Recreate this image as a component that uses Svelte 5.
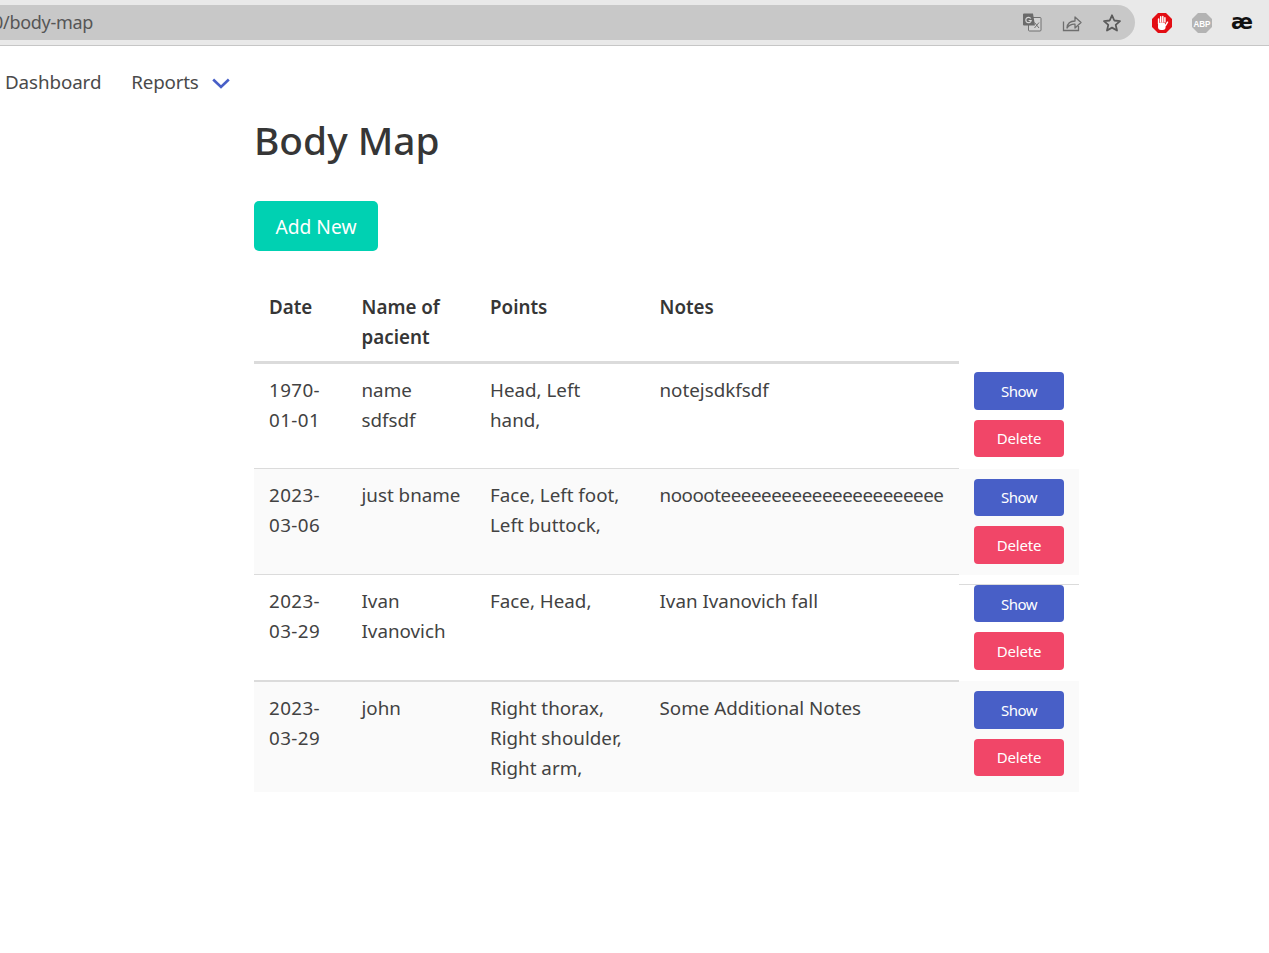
<script>
  const rows = [
    { date: '1970-01-01', name: 'name sdfsdf', points: 'Head, Left hand,', notes: 'notejsdkfsdf', cls: 'r1' },
    { date: '2023-03-06', name: 'just bname', points: 'Face, Left foot, Left buttock,', notes: 'nooooteeeeeeeeeeeeeeeeeeeeee', cls: 'r2' },
    { date: '2023-03-29', name: 'Ivan Ivanovich', points: 'Face, Head,', notes: 'Ivan Ivanovich fall', cls: 'r3' },
    { date: '2023-03-29', name: 'john', points: 'Right thorax, Right shoulder, Right arm,', notes: 'Some Additional Notes', cls: 'r4' }
  ];
</script>

<div class="chrome">
  <div class="pill">
    <span class="url">0/body-map</span>
    <div class="pill-icons">
      <svg width="20" height="20" viewBox="0 0 20 20" aria-hidden="true">
        <rect x="6.500" y="4.500" width="12.500" height="13.500" rx="1" fill="#d2d2d2" stroke="#707070" stroke-width="1"/>
        <path d="M12.500 9.500l4.500 5.500M17 9.500L12.500 15" fill="none" stroke="#707070" stroke-width="1"/>
        <path d="M2 0.500h9l2 12H2A1 1 0 0 1 1 11.500v-10A1 1 0 0 1 2 .5z" fill="#6a6a6a"/>
        <path d="M8.800 5.500A2.700 2.700 0 1 0 9.200 7.500H6.600" fill="none" stroke="#d8d8d8" stroke-width="1.200"/>
      </svg>
      <svg width="20" height="20" viewBox="0 0 20 20" aria-hidden="true">
        <path d="M1.500 8.500v9h15V13" fill="none" stroke="#6e6e6e" stroke-width="1.300"/>
        <path d="M5 15c.4-4.500 3.500-7 8-7V4l6 5.500-6 5.500v-3.800c-3.500-.2-6 1-8 3.800z" fill="none" stroke="#6e6e6e" stroke-width="1.300" stroke-linejoin="round"/>
      </svg>
      <svg width="20" height="20" viewBox="0 0 20 20" aria-hidden="true">
        <path d="M10 2.300l2.300 5.200 5.700.6-4.300 3.800 1.300 5.600-5-2.900-5 2.900 1.300-5.600L2 8.100l5.700-.6z" fill="none" stroke="#5a5a5a" stroke-width="1.800" stroke-linejoin="round"/>
      </svg>
    </div>
  </div>
  <div class="ext-icons">
    <svg width="22" height="22" viewBox="0 0 22 22" aria-hidden="true">
      <path d="M7 1h8l6 6v8l-6 6H7l-6-6V7z" fill="#e30d13"/>
      <rect x="7" y="10.500" width="7.600" height="7.500" rx="3" fill="#fff"/>
      <path d="M7.600 12V7M9.700 10V4.800M11.800 10V4.500M13.900 10V5.800M14.600 13.500l1.900-3.300" fill="none" stroke="#fff" stroke-width="1.500" stroke-linecap="round"/>
    </svg>
    <svg class="abp" width="22" height="22" viewBox="0 0 22 22" aria-hidden="true">
      <path d="M7 1h8l6 6v8l-6 6H7l-6-6V7z" fill="#b3b3b3"/>
      <text x="11" y="14.500" text-anchor="middle" class="abp-text" textLength="17" lengthAdjust="spacingAndGlyphs">ABP</text>
    </svg>
    <span class="ae">æ</span>
  </div>
</div>

<nav class="nav">
  <a class="nav-item" href="#dashboard">Dashboard</a>
  <a class="nav-item reports" href="#reports">Reports
    <svg width="18" height="12" viewBox="0 0 18 12" aria-hidden="true">
      <path d="M1.200 2.500l7.800 7.500 7.800-7.500" fill="none" stroke="#485fc7" stroke-width="2.600"/>
    </svg>
  </a>
</nav>

<main class="content">
  <h1 class="title">Body Map</h1>
  <button class="add">Add New</button>
  <table class="table">
    <colgroup>
      <col class="c1" /><col class="c2" /><col class="c3" /><col class="c4" /><col class="c5" />
    </colgroup>
    <thead>
      <tr>
        <th>Date</th>
        <th>Name of pacient</th>
        <th>Points</th>
        <th>Notes</th>
        <th class="plain"></th>
      </tr>
    </thead>
    <tbody>
      {#each rows as row}
        <tr class={row.cls}>
          <td class="date">{row.date}</td>
          <td class="name">{row.name}</td>
          <td>{row.points}</td>
          <td class="notes">{row.notes}</td>
          <td class="actions">
            <div class="stack">
              <button class="btn show">Show</button>
              <button class="btn del">Delete</button>
            </div>
          </td>
        </tr>
      {/each}
    </tbody>
  </table>
</main>

<style>
  :global(body) {
    margin: 0;
    background: #fff;
    color: #363636;
    font-family: "Noto Sans", "Open Sans", sans-serif;
  }
  .chrome {
    height: 40px;
    background: #e9e9e9;
    border-bottom: 1px solid #c6c6c6;
    display: flex;
    padding-top: 5px;
  }
  .pill {
    width: 1135px;
    height: 35px;
    background: #c8c8c8;
    border-radius: 0 18px 18px 0;
    display: flex;
    align-items: center;
    justify-content: space-between;
    overflow: hidden;
    flex: none;
  }
  .url {
    font-size: 18px;
    letter-spacing: -0.3px;
    color: #565656;
    margin-left: -7px;
    margin-top: -1px;
  }
  .pill-icons {
    display: flex;
    gap: 20px;
    margin-right: 13px;
  }
  .ext-icons {
    display: flex;
    align-items: center;
    height: 35px;
    padding-left: 16px;
    gap: 18px;
  }
  .abp-text {
    font: 700 9px "Liberation Sans", sans-serif;
    fill: #fff;
  }
  .ae {
    font: 700 21px/22px "DejaVu Sans", sans-serif;
    color: #111;
    width: 20px;
    margin-top: -1px;
  }
  .nav {
    display: flex;
    align-items: center;
    gap: 30px;
    height: 71px;
    padding-left: 5px;
    font-size: 18.800px;
    letter-spacing: -0.1px;
  }
  .nav-item {
    color: #4a4a4a;
    text-decoration: none;
  }
  .reports {
    display: flex;
    align-items: center;
    gap: 13px;
    letter-spacing: -0.2px;
  }
  .reports svg { margin-top: 2px; }
  .content {
    width: 825px;
    margin-left: 254px;
  }
  .title {
    margin: 0;
    font-size: 38.800px;
    font-weight: 500;
    line-height: 46px;
    height: 84px;
    color: #363636;
  }
  .add {
    display: block;
    width: 124px;
    height: 50px;
    background: #00d1b2;
    border: 0;
    border-radius: 5px;
    color: #fff;
    font: inherit;
    font-size: 19.200px;
    padding: 1px 0 0;
    margin-bottom: 31px;
  }
  .table {
    table-layout: fixed;
    width: 825px;
    border-collapse: separate;
    border-spacing: 0;
    font-size: 18.800px;
    line-height: 30px;
  }
  .c1 { width: 92.500px; }
  .c2 { width: 128.500px; }
  .c3 { width: 169.500px; }
  .c4 { width: 314.500px; }
  .c5 { width: 120px; }
  th {
    text-align: left;
    font-weight: 600;
    padding: 10px 15px 9px;
    border-bottom: 3px solid #dbdbdb;
    vertical-align: top;
    color: #363636;
  }
  th.plain { border-bottom: 0; }
  td {
    padding: 11px 15px 9px;
    vertical-align: top;
    box-sizing: border-box;
    color: #424242;
  }
  td.date { letter-spacing: 0.4px; }
  td.name { padding-right: 8px; }
  td.notes { white-space: nowrap; }
  .r2 td.notes { letter-spacing: -0.46px; }
  .r1 td { height: 105px; border-bottom: 1px solid #dbdbdb; }
  .r2 td { height: 106px; border-bottom: 1px solid #dbdbdb; }
  .r3 td { height: 106px; border-bottom: 1px solid #dbdbdb; }
  .r4 td { height: 111px; border-top: 1px solid #dbdbdb; }
  .r2, .r4 { background: #fafafa; }
  td.actions {
    border: 0;
    padding-top: 0;
    padding-bottom: 0;
  }
  .stack {
    display: flex;
    flex-direction: column;
    gap: 10px;
  }
  .r1 .stack { padding-top: 8px; }
  .r2 .stack { padding-top: 9.700px; }
  .r3 .stack {
    margin: 8.900px -15px 0;
    padding: 0 15px;
    border-top: 1px solid #dbdbdb;
  }
  .r4 .stack { padding-top: 10px; }
  .btn {
    width: 90px;
    height: 37.500px;
    border: 0;
    border-radius: 4px;
    color: #fff;
    font: inherit;
    font-size: 15px;
    letter-spacing: -0.15px;
    padding: 0;
  }
  .show { background: #485fc7; letter-spacing: -0.5px; }
  .del { background: #f14668; }
</style>
